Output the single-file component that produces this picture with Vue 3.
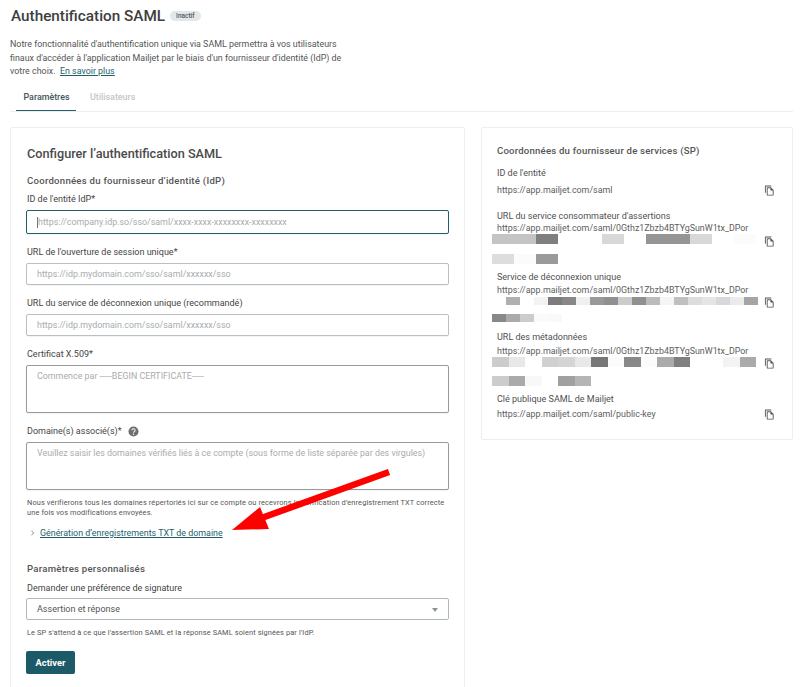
<script setup>
const sp = [
  { label: "ID de l'entité", value: 'https://app.mailjet.com/saml', cls: 'i1' },
  {
    label: "URL du service consommateur d'assertions",
    value: 'https://app.mailjet.com/saml/0Gthz1Zbzb4BTYgSunW1tx_DPor',
    cls: 'i2',
    rows: [
      { h: 10, gap: 10, w: 22, cells: ['#c4c4c4', '#c4c4c4', '#7f7f7f', '', '', '#d8d8d8', '', '#959595', '#959595', '#d8d8d8', '', '#fbfbfb'] },
      { h: 10, gap: 0, w: 22, cells: ['#dddddd', '#fbfbfb', '#9a9a9a'] }
    ]
  },
  {
    label: 'Service de déconnexion unique',
    value: 'https://app.mailjet.com/saml/0Gthz1Zbzb4BTYgSunW1tx_DPor',
    cls: 'i3',
    rows: [
      { h: 8, gap: 9, w: 14, cells: ['', '#b0b0b0', '', '#f3f3f3', '#7c7c7c', '#888888', '#f0f0f0', '#999999', '#909090', '#cccccc', '#909090', '#bbbbbb', '#f5f5f5', '#c0c0c0', '#dddddd', '#e5e5e5', '#d8d8d8', '#ebebeb', '#a5a5a5'] },
      { h: 8, gap: 0, w: 14, cells: ['#888888', '#aaaaaa', '#cccccc', '#fafafa', '#f9f9f9'] }
    ]
  },
  {
    label: 'URL des métadonnées',
    value: 'https://app.mailjet.com/saml/0Gthz1Zbzb4BTYgSunW1tx_DPor',
    cls: 'i4',
    rows: [
      { h: 10, gap: 9, w: 16.5, cells: ['#cccccc', '#e8e8e8', '', '#d0d0d0', '#d5d5d5', '#e8e8e8', '#777777', '#fbfbfb', '#888888', '#fcfcfc', '#aaaaaa', '#808080', '', '', '#f3f3f3', '#aaaaaa'] },
      { h: 10, gap: 0, w: 16.5, cells: ['#cccccc', '#aaaaaa', '#f8f8f8', '', '#a0a0a0', '#b5b5b5'] }
    ]
  },
  { label: 'Clé publique SAML de Mailjet', value: 'https://app.mailjet.com/saml/public-key', cls: 'i5' }
]
</script>

<template>
  <div class="page">
    <header class="head">
      <h1>Authentification SAML</h1>
      <span class="badge">Inactif</span>
    </header>
    <p class="intro">
      Notre fonctionnalité d'authentification unique via SAML permettra à vos utilisateurs
      finaux d'accéder à l'application Mailjet par le biais d'un fournisseur d'identité (IdP) de
      votre choix. &nbsp;<a class="link">En savoir plus</a>
    </p>
    <nav class="tabs">
      <span class="tab active">Paramètres</span>
      <span class="tab">Utilisateurs</span>
    </nav>

    <div class="cols">
      <section class="card left">
        <h2>Configurer l’authentification SAML</h2>
        <h3 class="sec">Coordonnées du fournisseur d’identité (IdP)</h3>

        <label class="lab first">ID de l'entité IdP*</label>
        <div class="focuswrap">
          <input class="field focus" placeholder="https://company.idp.so/sso/saml/xxxx-xxxx-xxxxxxxx-xxxxxxxx" />
          <i class="cursor"></i>
        </div>

        <label class="lab">URL de l'ouverture de session unique*</label>
        <input class="field" placeholder="https://idp.mydomain.com/sso/saml/xxxxxx/sso" />

        <label class="lab">URL du service de déconnexion unique (recommandé)</label>
        <input class="field" placeholder="https://idp.mydomain.com/sso/saml/xxxxxx/sso" />

        <label class="lab">Certificat X.509*</label>
        <textarea class="field area" placeholder="Commence par -----BEGIN CERTIFICATE-----"></textarea>

        <label class="lab with-help">
          Domaine(s) associé(s)*
          <svg class="help" viewBox="0 0 12 12" width="11" height="11">
            <circle cx="6" cy="6" r="5.5" fill="#6f6f6f" />
            <path d="M4.3 4.7a1.7 1.7 0 1 1 2.6 1.4c-.6.4-.9.7-.9 1.3" fill="none" stroke="#fff" stroke-width="1.1" />
            <circle cx="6" cy="9" r=".75" fill="#fff" />
          </svg>
        </label>
        <textarea class="field area" placeholder="Veuillez saisir les domaines vérifiés liés à ce compte (sous forme de liste séparée par des virgules)"></textarea>
        <p class="hint two">Nous vérifierons tous les domaines répertoriés ici sur ce compte ou recevrons la vérification d’enregistrement TXT correcte une fois vos modifications envoyées.</p>

        <div class="expander">
          <svg viewBox="0 0 6 8" width="5" height="6"><path d="M1.5 1l3 3-3 3" fill="none" stroke="#666" stroke-width="1" /></svg>
          <a class="link">Génération d’enregistrements TXT de domaine</a>
        </div>

        <h3 class="sec custom">Paramètres personnalisés</h3>
        <label class="lab sig">Demander une préférence de signature</label>
        <div class="select">
          <span>Assertion et réponse</span>
          <i class="caret"></i>
        </div>
        <p class="hint one">Le SP s'attend à ce que l'assertion SAML et la réponse SAML soient signées par l'IdP.</p>
        <button class="btn">Activer</button>
      </section>

      <aside class="card right">
        <h3 class="sptitle">Coordonnées du fournisseur de services (SP)</h3>
        <div v-for="item in sp" :key="item.label" class="item" :class="item.cls">
          <div class="itemlabel">{{ item.label }}</div>
          <div class="itemvalue">{{ item.value }}</div>
          <div v-if="item.rows" class="redact">
            <div v-for="(row, i) in item.rows" :key="i" class="rrow" :style="{ height: row.h + 'px', marginBottom: row.gap + 'px' }">
              <span v-for="(c, j) in row.cells" :key="j" :style="{ width: row.w + 'px', background: c || 'transparent' }"></span>
            </div>
          </div>
          <svg class="copy" viewBox="0 0 24 24" width="11" height="11">
            <path fill="#555" d="M16 1H4C2.9 1 2 1.9 2 3v14h2V3h12V1zm-1 4H8C6.9 5 6 5.9 6 7v14c0 1.1.9 2 2 2h11c1.1 0 2-.9 2-2V11l-6-6zm4 16H8V7h6v5h5v9z" />
          </svg>
        </div>
      </aside>
    </div>

    <svg class="arrow" width="807" height="687" viewBox="0 0 807 687">
      <path d="M389 472 L256 520" stroke="#f00" stroke-width="6.5" fill="none" />
      <path d="M232 530 L260 507 L269 529 Z" fill="#f00" />
    </svg>
  </div>
</template>

<style>
html, body { margin: 0; background: #fff; }
</style>

<style scoped>
.page {
  position: relative;
  width: 807px;
  height: 687px;
  overflow: hidden;
  box-sizing: border-box;
  padding: 0 14px 0 10px;
  font-family: Roboto, "Liberation Sans", sans-serif;
  color: #4a4a4a;
  background: #fff;
}
.head { display: flex; align-items: center; gap: 5px; height: 32px; padding-left: 1px; }
h1 { margin: 0; font-size: 15.3px; font-weight: 500; color: #3e3e3e; }
.badge {
  height: 10px; line-height: 10px; padding: 0 6px; border-radius: 5px;
  background: #e4e7ea; color: #4d5a60; font-size: 6.5px; font-weight: 500;
}
.intro { margin: 6px 0 0; width: 345px; font-size: 8.9px; line-height: 13.5px; color: #555; height: 41px; }
.link { color: #1e5f6d; text-decoration: underline; }
.tabs { display: flex; height: 24px; margin-top: 8px; border-bottom: 1px solid #eeeeee; padding-left: 6px; }
.tab { padding: 5px 7px 0 7.5px; height: 18px; font-size: 8.9px; color: #c3c7c9; font-weight: 500; margin-right: 6px; }
.tab.active { color: #43555a; border-bottom: 1px solid #1e5f6d; }
.cols { display: flex; align-items: flex-start; gap: 16px; margin-top: 15px; }
.card { border: 1px solid #eeeeee; border-radius: 2px; box-sizing: border-box; background: #fff; }
.left { width: 455px; height: 620px; padding: 18px 15px 0; flex: none; }
.right { width: 312px; height: 313px; padding: 17px 15px 0; flex: none; }
h2 { margin: 0; padding-left: 1px; font-size: 12.7px; line-height: 15px; font-weight: 500; color: #4a4a4a; }
.sec { margin: 14px 0 0; padding-left: 1px; font-size: 9.6px; line-height: 12px; font-weight: 500; color: #555; letter-spacing: .25px; }
.lab { display: block; margin: 12px 0 5px; padding-left: 1px; font-size: 9px; line-height: 12px; color: #444; font-weight: 400; }
.lab.first { margin: 6px 0 5px; }
.field {
  display: block; width: 100%; height: 22px; box-sizing: border-box; padding: 0 10px;
  border: 1px solid #b9c0c4; border-radius: 2px; background: #fff; outline: none;
  font: 400 8.9px Roboto, sans-serif; color: #555; box-shadow: 0 1px 1px rgba(0,0,0,.05);
}
.field::placeholder { color: #a8acae; opacity: 1; }
.focuswrap { position: relative; }
.focus { height: 24px; border-color: #1e5f6d; padding-left: 11px; }
.cursor { position: absolute; left: 11px; top: 7px; width: 1px; height: 11px; background: #777; }
.area { height: 48px; padding: 5px 10px; resize: none; border-color: #9a9a9a; }
.with-help { display: flex; align-items: center; gap: 6px; }
.hint { margin: 0; padding-left: 1px; font-size: 7.4px; line-height: 10px; color: #555; letter-spacing: .12px; }
.two { margin-top: 8px; }
.expander { display: flex; align-items: center; gap: 5px; margin-top: 9px; padding-left: 4px; height: 12px; font-size: 8.9px; }
.custom { margin-top: 24px; }
.sig { margin: 7px 0 4px; }
.select {
  position: relative; height: 22px; box-sizing: border-box; padding: 0 10px; display: flex; align-items: center;
  border: 1px solid #b0b8bc; border-radius: 2px; font-size: 9px; color: #555;
}
.caret {
  position: absolute; right: 10px; top: 9px; width: 0; height: 0;
  border-left: 3px solid transparent; border-right: 3px solid transparent; border-top: 4px solid #8a9499;
}
.one { margin-top: 8px; }
.btn {
  display: block; margin-top: 13px; width: 49px; height: 23px; border: 0; border-radius: 2px; padding: 0;
  background: #1c5a68; color: #fff; font: 700 9.3px Roboto, sans-serif;
}
.sptitle { margin: 0; font-size: 9.6px; line-height: 12px; font-weight: 500; color: #555; letter-spacing: .2px; }
.item { position: relative; font-size: 9px; line-height: 12px; }
.itemlabel { color: #4f4f4f; }
.itemvalue { color: #5d5d5d; font-size: 8.9px; }
.redact { margin-left: -5px; }
.rrow { display: flex; }
.rrow span { display: block; flex: none; height: 100%; }
.copy { position: absolute; right: 2.5px; }
.i1 { margin-top: 10px; }
.i1 .itemvalue { margin-top: 5px; }
.i1 .copy { top: 17.5px; }
.i2 { margin-top: 14px; }
.i2 .copy { top: 25.5px; }
.i3 { margin-top: 7px; }
.i3 .itemvalue { margin-top: 1px; }
.i3 .redact { margin-top: 1px; }
.i3 .copy { top: 25.5px; }
.i4 { margin-top: 9px; }
.i4 .itemvalue { margin-top: 2px; }
.i4 .copy { top: 26.5px; }
.i5 { margin-top: 7px; }
.i5 .itemvalue { margin-top: 3px; }
.i5 .copy { top: 15.5px; }
.arrow { position: absolute; left: 0; top: 0; pointer-events: none; }
</style>
